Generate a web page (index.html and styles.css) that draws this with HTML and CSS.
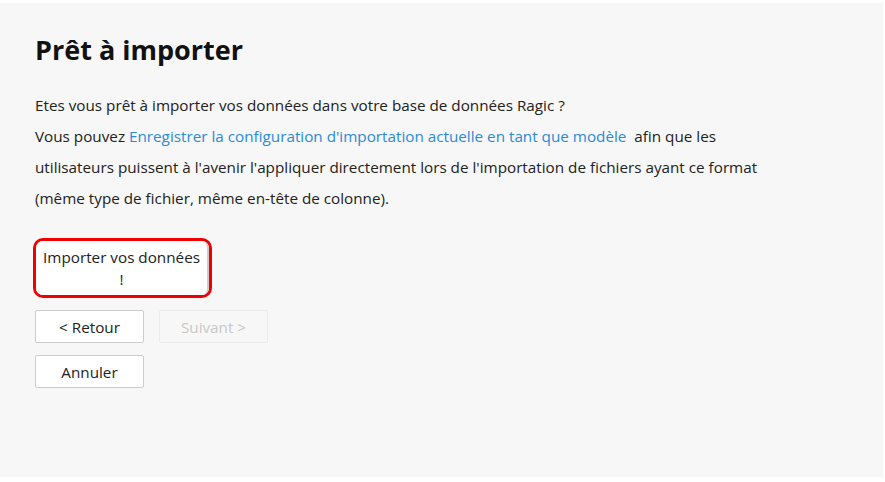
FILE: index.html
```html
<!DOCTYPE html>
<html lang="fr">
<head>
  <meta charset="UTF-8" />
  <title>Prêt à importer</title>
  <link rel="stylesheet" href="styles.css">
</head>
<body>
  <div class="panel">
    <h1>Prêt à importer</h1>
    <p class="intro">
      Etes vous prêt à importer vos données dans votre base de données Ragic ?<br>
      Vous pouvez <a href="#">Enregistrer la configuration d'importation actuelle en tant que modèle</a>&nbsp; afin que les<br>
      utilisateurs puissent à l'avenir l'appliquer directement lors de l'importation de fichiers ayant ce format<br>
      (même type de fichier, même en-tête de colonne).
    </p>

    <div class="highlight">
      <button class="btn btn-import">Importer vos données !</button>
    </div>

    <div class="nav-row">
      <button class="btn">&lt; Retour</button>
      <button class="btn" disabled>Suivant &gt;</button>
    </div>
    <div class="nav-row">
      <button class="btn">Annuler</button>
    </div>
  </div>
</body>
</html>
```

FILE: styles.css
```css
* {
  box-sizing: border-box;
}

body {
  margin: 0;
  background-color: #fff;
  font-family: 'Open Sans', sans-serif;
  color: #222;
}

.panel {
  margin: 3px 2px 0 0;
  height: 474px;
  background-color: #f7f7f7;
  padding: 29px 35px;
}

.panel h1 {
  margin: 0 0 22px;
  font-size: 27px;
  font-weight: 700;
  color: #111;
  line-height: 36px;
}

.intro {
  margin: 0 0 24px;
  font-size: 15.25px;
  line-height: 31px;
}

.intro a {
  color: #2b8ad6;
  text-decoration: none;
}

.highlight {
  display: inline-block;
  margin-left: -2px;
  border: 3px solid #f20000;
  border-radius: 10px;
  background-color: #fff;
}

.btn {
  font-family: 'Open Sans', sans-serif;
  font-size: 15.25px;
  color: #222;
  background-color: #fff;
  border: 1px solid #ccc;
  border-radius: 2px;
  width: 109px;
  height: 33px;
  padding: 0;
  cursor: pointer;
}

.btn:disabled {
  color: #c8c8c8;
  border-color: #ececec;
  background-color: #f7f7f7;
  cursor: default;
}

.btn-import {
  display: block;
  width: 173px;
  height: 54px;
  line-height: 22px;
  padding: 3px 6px 4px;
  border: none;
  border-right: 2px solid #ccc;
  border-radius: 7px;
}

.nav-row {
  display: flex;
  gap: 15px;
  margin-top: 12px;
}
```
